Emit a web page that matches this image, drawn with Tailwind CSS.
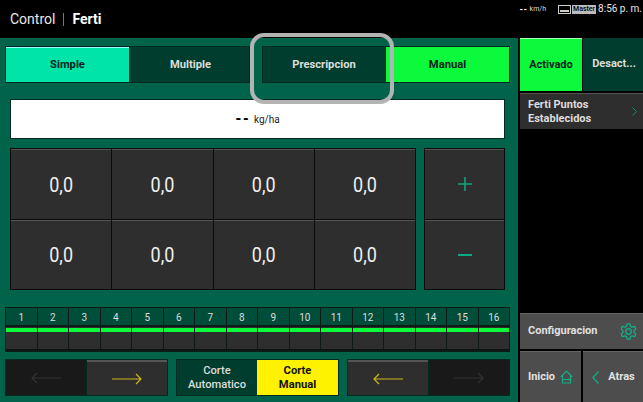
<!DOCTYPE html>
<html><head><meta charset="utf-8">
<script src="https://cdn.jsdelivr.net/npm/@tailwindcss/browser@4"></script>
</head>
<body class="m-0 bg-black">
<div class="relative w-[643px] h-[402px] overflow-hidden bg-black font-['Roboto',sans-serif] text-white">
  <!-- header -->
  <div class="h-[38px] flex items-center justify-between">
    <div class="flex items-center pl-[10px] text-[14px] leading-none">
      <span class="text-[#e8e8e8] scale-y-[1.06]">Control</span>
      <span class="w-px h-[13px] bg-[#777] mx-[8px]"></span>
      <span class="font-bold scale-y-[1.06]">Ferti</span>
    </div>
    <div class="flex items-center h-[16px] self-start mt-[1px] pr-[1px]">
      <span class="text-[9px] font-bold leading-none mr-[2px] tracking-[0.5px]">--</span>
      <span class="text-[7px] leading-none text-[#ddd] mr-[12px]">km/h</span>
      <svg width="13" height="9" viewBox="0 0 13 9" class="mr-[1px]"><rect x="0.5" y="0.5" width="12" height="8" fill="none" stroke="#ccc"/><rect x="2" y="5" width="9" height="2" fill="#ccc"/></svg>
      <span class="bg-[#bbb] text-black text-[7px] leading-[9px] px-[1px] mr-[2px] font-medium">Master</span>
      <span class="text-[10px] leading-none text-[#e8e8e8]">8:56 p. m.</span>
    </div>
  </div>
  <div class="flex h-[364px]">
    <!-- left panel -->
    <div class="w-[518px] h-full bg-[#00634a] flex flex-col pl-[5px] pr-[8px] pt-[8px]">
      <!-- tabs -->
      <div class="flex h-[37px] text-[11.2px] font-bold">
        <div class="flex flex-1 border border-[#012a20] bg-[#003d2e]">
          <div class="w-[123px] bg-[#00e4aa] flex items-center justify-center text-[#04241c] border-t border-[#9ff] pt-[1px]">Simple</div>
          <div class="flex-1 flex items-center justify-center text-[#ddd] pl-[3px] pt-[1px]">Multiple</div>
        </div>
        <div class="w-[12px]"></div>
        <div class="flex w-[248px] border border-[#012a20] bg-[#003d2e]">
          <div class="w-[123px] flex items-center justify-center text-[#ddd] border-r border-[#012a20] pt-[1px]">Prescripcion</div>
          <div class="flex-1 bg-[#0bfb3c] flex items-center justify-center text-[#04241c] pt-[1px]">Manual</div>
        </div>
      </div>
      <!-- display -->
      <div class="mt-[16px] ml-[5px] mr-[5px] h-[40px] bg-white border border-[#012a20] flex items-center justify-center text-[#222] text-[10px]">
        <span class="font-black text-[14px] leading-none mr-[4px] tracking-[1px] text-black">--</span><span>kg/ha</span>
      </div>
      <!-- pad -->
      <div class="mt-[9px] ml-[5px] mr-[5px] flex h-[142px] gap-[8px]">
        <div class="w-[407px] grid grid-cols-4 grid-rows-2 border border-[#0b0b0b] bg-[#0b0b0b] gap-px">
          <div class="bg-[#2e2e2e] border-t border-[#555] flex items-center justify-center text-[18px] text-[#f0f0f0]"><span class="scale-y-[1.15]">0,0</span></div>
          <div class="bg-[#2e2e2e] border-t border-[#555] flex items-center justify-center text-[18px] text-[#f0f0f0]"><span class="scale-y-[1.15]">0,0</span></div>
          <div class="bg-[#2e2e2e] border-t border-[#555] flex items-center justify-center text-[18px] text-[#f0f0f0]"><span class="scale-y-[1.15]">0,0</span></div>
          <div class="bg-[#2e2e2e] border-t border-[#555] flex items-center justify-center text-[18px] text-[#f0f0f0]"><span class="scale-y-[1.15]">0,0</span></div>
          <div class="bg-[#2e2e2e] border-t border-[#555] flex items-center justify-center text-[18px] text-[#f0f0f0]"><span class="scale-y-[1.15]">0,0</span></div>
          <div class="bg-[#2e2e2e] border-t border-[#555] flex items-center justify-center text-[18px] text-[#f0f0f0]"><span class="scale-y-[1.15]">0,0</span></div>
          <div class="bg-[#2e2e2e] border-t border-[#555] flex items-center justify-center text-[18px] text-[#f0f0f0]"><span class="scale-y-[1.15]">0,0</span></div>
          <div class="bg-[#2e2e2e] border-t border-[#555] flex items-center justify-center text-[18px] text-[#f0f0f0]"><span class="scale-y-[1.15]">0,0</span></div>
        </div>
        <div class="w-[81px] grid grid-rows-2 border border-[#0b0b0b] bg-[#0b0b0b] gap-px">
          <div class="bg-[#2e2e2e] border-t border-[#555] flex items-center justify-center">
            <svg width="14" height="14" viewBox="0 0 14 14"><path d="M7 0V14M0 7H14" stroke="#10a37d" stroke-width="1.6"/></svg>
          </div>
          <div class="bg-[#2e2e2e] border-t border-[#555] flex items-center justify-center">
            <svg width="14" height="14" viewBox="0 0 14 14"><path d="M0 7H14" stroke="#00c896" stroke-width="1.6"/></svg>
          </div>
        </div>
      </div>
      <!-- sections -->
      <div class="mt-[17px] h-[45px] grid grid-cols-16 gap-x-px bg-[#0d1a16] border border-[#0d1a16] w-[505px]">
        <div class="flex flex-col"><div class="h-[17px] bg-[#004d3a] flex items-center justify-center text-[10px] text-[#ddd]"><span class="scale-y-[1.15]">1</span></div><div class="mt-[2px] h-[23px] bg-[#2e2e2e] pt-[1px] border-b border-[#111]"><div class="h-[4px] bg-[#0bfb3c]"></div></div></div>
        <div class="flex flex-col"><div class="h-[17px] bg-[#004d3a] flex items-center justify-center text-[10px] text-[#ddd]"><span class="scale-y-[1.15]">2</span></div><div class="mt-[2px] h-[23px] bg-[#2e2e2e] pt-[1px] border-b border-[#111]"><div class="h-[4px] bg-[#0bfb3c]"></div></div></div>
        <div class="flex flex-col"><div class="h-[17px] bg-[#004d3a] flex items-center justify-center text-[10px] text-[#ddd]"><span class="scale-y-[1.15]">3</span></div><div class="mt-[2px] h-[23px] bg-[#2e2e2e] pt-[1px] border-b border-[#111]"><div class="h-[4px] bg-[#0bfb3c]"></div></div></div>
        <div class="flex flex-col"><div class="h-[17px] bg-[#004d3a] flex items-center justify-center text-[10px] text-[#ddd]"><span class="scale-y-[1.15]">4</span></div><div class="mt-[2px] h-[23px] bg-[#2e2e2e] pt-[1px] border-b border-[#111]"><div class="h-[4px] bg-[#0bfb3c]"></div></div></div>
        <div class="flex flex-col"><div class="h-[17px] bg-[#004d3a] flex items-center justify-center text-[10px] text-[#ddd]"><span class="scale-y-[1.15]">5</span></div><div class="mt-[2px] h-[23px] bg-[#2e2e2e] pt-[1px] border-b border-[#111]"><div class="h-[4px] bg-[#0bfb3c]"></div></div></div>
        <div class="flex flex-col"><div class="h-[17px] bg-[#004d3a] flex items-center justify-center text-[10px] text-[#ddd]"><span class="scale-y-[1.15]">6</span></div><div class="mt-[2px] h-[23px] bg-[#2e2e2e] pt-[1px] border-b border-[#111]"><div class="h-[4px] bg-[#0bfb3c]"></div></div></div>
        <div class="flex flex-col"><div class="h-[17px] bg-[#004d3a] flex items-center justify-center text-[10px] text-[#ddd]"><span class="scale-y-[1.15]">7</span></div><div class="mt-[2px] h-[23px] bg-[#2e2e2e] pt-[1px] border-b border-[#111]"><div class="h-[4px] bg-[#0bfb3c]"></div></div></div>
        <div class="flex flex-col"><div class="h-[17px] bg-[#004d3a] flex items-center justify-center text-[10px] text-[#ddd]"><span class="scale-y-[1.15]">8</span></div><div class="mt-[2px] h-[23px] bg-[#2e2e2e] pt-[1px] border-b border-[#111]"><div class="h-[4px] bg-[#0bfb3c]"></div></div></div>
        <div class="flex flex-col"><div class="h-[17px] bg-[#004d3a] flex items-center justify-center text-[10px] text-[#ddd]"><span class="scale-y-[1.15]">9</span></div><div class="mt-[2px] h-[23px] bg-[#2e2e2e] pt-[1px] border-b border-[#111]"><div class="h-[4px] bg-[#0bfb3c]"></div></div></div>
        <div class="flex flex-col"><div class="h-[17px] bg-[#004d3a] flex items-center justify-center text-[10px] text-[#ddd]"><span class="scale-y-[1.15]">10</span></div><div class="mt-[2px] h-[23px] bg-[#2e2e2e] pt-[1px] border-b border-[#111]"><div class="h-[4px] bg-[#0bfb3c]"></div></div></div>
        <div class="flex flex-col"><div class="h-[17px] bg-[#004d3a] flex items-center justify-center text-[10px] text-[#ddd]"><span class="scale-y-[1.15]">11</span></div><div class="mt-[2px] h-[23px] bg-[#2e2e2e] pt-[1px] border-b border-[#111]"><div class="h-[4px] bg-[#0bfb3c]"></div></div></div>
        <div class="flex flex-col"><div class="h-[17px] bg-[#004d3a] flex items-center justify-center text-[10px] text-[#ddd]"><span class="scale-y-[1.15]">12</span></div><div class="mt-[2px] h-[23px] bg-[#2e2e2e] pt-[1px] border-b border-[#111]"><div class="h-[4px] bg-[#0bfb3c]"></div></div></div>
        <div class="flex flex-col"><div class="h-[17px] bg-[#004d3a] flex items-center justify-center text-[10px] text-[#ddd]"><span class="scale-y-[1.15]">13</span></div><div class="mt-[2px] h-[23px] bg-[#2e2e2e] pt-[1px] border-b border-[#111]"><div class="h-[4px] bg-[#0bfb3c]"></div></div></div>
        <div class="flex flex-col"><div class="h-[17px] bg-[#004d3a] flex items-center justify-center text-[10px] text-[#ddd]"><span class="scale-y-[1.15]">14</span></div><div class="mt-[2px] h-[23px] bg-[#2e2e2e] pt-[1px] border-b border-[#111]"><div class="h-[4px] bg-[#0bfb3c]"></div></div></div>
        <div class="flex flex-col"><div class="h-[17px] bg-[#004d3a] flex items-center justify-center text-[10px] text-[#ddd]"><span class="scale-y-[1.15]">15</span></div><div class="mt-[2px] h-[23px] bg-[#2e2e2e] pt-[1px] border-b border-[#111]"><div class="h-[4px] bg-[#0bfb3c]"></div></div></div>
        <div class="flex flex-col"><div class="h-[17px] bg-[#004d3a] flex items-center justify-center text-[10px] text-[#ddd]"><span class="scale-y-[1.15]">16</span></div><div class="mt-[2px] h-[23px] bg-[#2e2e2e] pt-[1px] border-b border-[#111]"><div class="h-[4px] bg-[#0bfb3c]"></div></div></div>
      </div>
      <!-- bottom -->
      <div class="mt-[7px] flex h-[37px] gap-[8px] w-[505px]">
        <div class="w-[163px] flex border border-[#012a20] bg-[#012a20] gap-px">
          <div class="flex-1 bg-[#191919] flex items-center justify-center">
            <svg width="30" height="12" viewBox="0 0 30 12"><path d="M30 6H1M6 1L1 6L6 11" fill="none" stroke="#333" stroke-width="1.2"/></svg>
          </div>
          <div class="flex-1 bg-[#2e2e2e] border-t-2 border-[#555] flex items-center justify-center">
            <svg width="30" height="12" viewBox="0 0 30 12"><path d="M0 6H29M24 1L29 6L24 11" fill="none" stroke="#c9b81a" stroke-width="1.2"/></svg>
          </div>
        </div>
        <div class="w-[163px] flex border border-[#012a20] bg-[#003d2e] text-[11.2px] leading-[14px] font-medium text-center">
          <div class="flex-1 flex items-center justify-center text-[#ddd]">Corte<br>Automatico</div>
          <div class="w-[81px] bg-[#fff200] flex items-center justify-center text-[#111] font-bold">Corte<br>Manual</div>
        </div>
        <div class="w-[163px] flex border border-[#012a20] bg-[#012a20] gap-px">
          <div class="flex-1 bg-[#2e2e2e] border-t-2 border-[#555] flex items-center justify-center">
            <svg width="30" height="12" viewBox="0 0 30 12"><path d="M30 6H1M6 1L1 6L6 11" fill="none" stroke="#c9b81a" stroke-width="1.2"/></svg>
          </div>
          <div class="flex-1 bg-[#191919] flex items-center justify-center">
            <svg width="30" height="12" viewBox="0 0 30 12"><path d="M0 6H29M24 1L29 6L24 11" fill="none" stroke="#333" stroke-width="1.2"/></svg>
          </div>
        </div>
      </div>
    </div>
    <!-- right panel -->
    <div class="flex-1 flex flex-col pl-[2px] bg-black text-[11px] font-bold">
      <div class="flex h-[53px] gap-px bg-black">
        <div class="w-[62px] bg-[#0bfb3c] flex items-center justify-center text-[#04241c] border-t border-[#aaffbb]">Activado</div>
        <div class="flex-1 bg-[#003d2e] flex items-center justify-center text-[#ddd] pl-[2px]">Desact...</div>
      </div>
      <div class="mt-[2px] h-[36px] bg-[#2e2e2e] border-t border-[#555] flex items-center justify-between pl-[8px] pr-[6px] text-[#ddd] leading-[14px]">
        <span>Ferti Puntos<br>Establecidos</span>
        <svg width="5" height="9" viewBox="0 0 5 9"><path d="M0.500 0.500L4.500 4.500L0.500 8.500" fill="none" stroke="#0d8f6e" stroke-width="1"/></svg>
      </div>
      <div class="flex-1"></div>
      <div class="h-[36px] bg-[#4d4d4d] border-t border-[#666] flex items-center justify-between pl-[8px] pr-[5px] text-[#e0e0e0]">
        <span>Configuracion</span>
        <svg width="19" height="19" viewBox="0 0 24 24" fill="none" stroke="#12b088" stroke-width="1.6" stroke-linejoin="round"><path d="M12.220 2h-.44a2 2 0 0 0-2 2v.18a2 2 0 0 1-1 1.730l-.43.25a2 2 0 0 1-2 0l-.15-.08a2 2 0 0 0-2.730.73l-.22.38a2 2 0 0 0 .73 2.730l.15.1a2 2 0 0 1 1 1.720v.51a2 2 0 0 1-1 1.740l-.15.09a2 2 0 0 0-.73 2.730l.22.38a2 2 0 0 0 2.730.73l.15-.08a2 2 0 0 1 2 0l.43.25a2 2 0 0 1 1 1.730V20a2 2 0 0 0 2 2h.44a2 2 0 0 0 2-2v-.18a2 2 0 0 1 1-1.730l.43-.25a2 2 0 0 1 2 0l.15.08a2 2 0 0 0 2.730-.73l.22-.39a2 2 0 0 0-.73-2.730l-.15-.08a2 2 0 0 1-1-1.740v-.5a2 2 0 0 1 1-1.740l.15-.09a2 2 0 0 0 .73-2.730l-.22-.38a2 2 0 0 0-2.730-.73l-.15.08a2 2 0 0 1-2 0l-.43-.25a2 2 0 0 1-1-1.730V4a2 2 0 0 0-2-2z"/><circle cx="12" cy="12" r="3.500"/></svg>
      </div>
      <div class="mt-[2px] flex h-[51px] gap-[2px] text-[#e0e0e0]">
        <div class="w-[61px] bg-[#4d4d4d] border-t border-[#666] flex items-center justify-center gap-[5px]">
          <span>Inicio</span>
          <svg width="13" height="14" viewBox="0 0 13 14" fill="none" stroke="#12b088" stroke-width="1.2"><path d="M0.800 7L6.500 1L12.200 7M2.500 6V13H10.500V6M2.500 9.500H10.500"/></svg>
        </div>
        <div class="flex-1 bg-[#4d4d4d] border-t border-[#666] flex items-center justify-center gap-[9px] pl-[1px]">
          <svg width="7" height="13" viewBox="0 0 7 13" fill="none" stroke="#12b088" stroke-width="1.2"><path d="M6.500 0.500L0.800 6.500L6.500 12.500"/></svg>
          <span>Atras</span>
        </div>
      </div>
    </div>
  </div>
  <!-- highlight overlay -->
  <div class="absolute left-[250px] top-[33px] w-[144px] h-[71px] rounded-[14px] border-4 border-[#b3b3b3]"></div>
</div>
</body></html>
